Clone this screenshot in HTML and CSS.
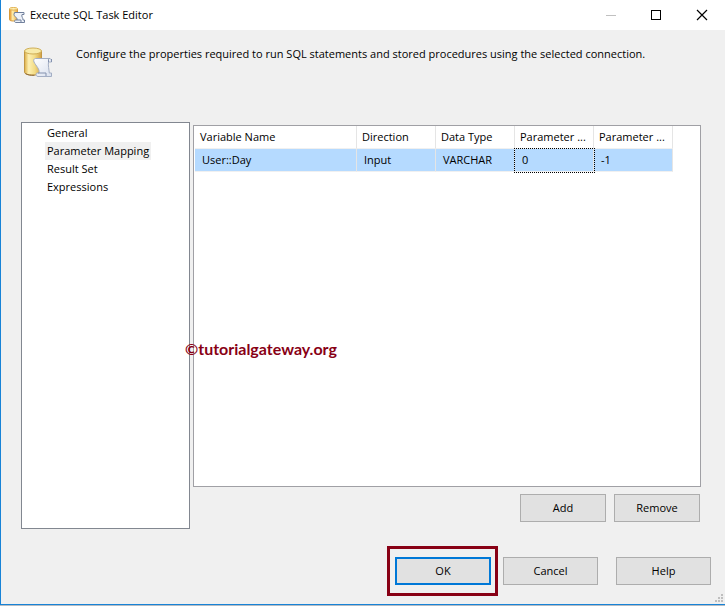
FILE: index.html
```html
<!DOCTYPE html>
<html lang="en">
<head>
    <meta charset="UTF-8">
    <meta name="viewport" content="width=device-width, initial-scale=1.0">
    <title>Execute SQL Task Editor</title>
    <link rel="stylesheet" href="styles.css">
</head>
<body>
    <svg class="defs" width="0" height="0" aria-hidden="true">
        <defs>
            <linearGradient id="gold" x1="0" x2="1" y1="0" y2="0">
                <stop offset="0" stop-color="#dcae45"/>
                <stop offset="0.25" stop-color="#fdf0b4"/>
                <stop offset="0.6" stop-color="#f3dc86"/>
                <stop offset="1" stop-color="#d3a043"/>
            </linearGradient>
            <linearGradient id="orange" x1="0" x2="1" y1="0" y2="0">
                <stop offset="0" stop-color="#e08a1e"/>
                <stop offset="0.4" stop-color="#fff0b0"/>
                <stop offset="1" stop-color="#eba43a"/>
            </linearGradient>
            <linearGradient id="paper" x1="0" x2="1" y1="0" y2="1">
                <stop offset="0" stop-color="#ffffff"/>
                <stop offset="1" stop-color="#d9e0ee"/>
            </linearGradient>
        </defs>
        <symbol id="sql-task" viewBox="0 0 30 32">
            <path d="M1.500 4v21c0 2 3 3 8.500 3s8.500-1 8.500-3V4z" fill="url(#gold)" stroke="#c19745"/>
            <path d="M2.500 26.500c2 1.500 5 2 9 1.800" fill="none" stroke="#8d6a38"/>
            <ellipse cx="10" cy="4" rx="8.500" ry="3" fill="#f8ebaa" stroke="#cfae56"/>
            <path d="M12.500 11.500h14c1.500 0 2 1.500 2 3.500h-3c-.5 4 .5 7 .8 11h2.200v3.500H15c-2.500 0-2.500-3.500-.5-3.500h1.500c1-4-3-7-5-11-.8-2 .2-3.500 1.500-3.500z" fill="url(#paper)" stroke="#a3aec4"/>
            <path d="M25.500 15v-2c0-1 .5-1.500 1-1.500M15 26h8v3M28.500 12v3" fill="none" stroke="#8391ae"/>
        </symbol>
        <symbol id="sql-task-small" viewBox="0 0 16 16">
            <path d="M.5 2v10.500c0 1 1.500 1.500 4 1.500s4-.5 4-1.500V2z" fill="url(#orange)" stroke="#d99a3a"/>
            <ellipse cx="4.500" cy="1.800" rx="4" ry="1.300" fill="#fff0b5" stroke="#e0b050"/>
            <path d="M5.500 5.500h9.500v2h-2c-1 2 1.500 4 1 5.500h1.500v2.500H7c-2 0-2-2.500 0-2.500h1c1-2-3-3.500-3-5.500z" fill="#eef2f9" stroke="#71809c"/>
            <path d="M8 13h4v2" fill="none" stroke="#71809c"/>
        </symbol>
    </svg>

    <div class="window">
        <header class="title-bar">
            <svg class="title-icon" aria-hidden="true"><use href="#sql-task-small"/></svg>
            <h1>Execute SQL Task Editor</h1>
            <div class="window-buttons">
                <button type="button" aria-label="Minimize" disabled>
                    <svg width="12" height="12" viewBox="0 0 12 12"><path d="M2 6.500h10" stroke="#c0c0c0"/></svg>
                </button>
                <button type="button" aria-label="Maximize">
                    <svg width="12" height="12" viewBox="0 0 12 12"><rect x="1.500" y="1.500" width="9" height="9" fill="none" stroke="#000"/></svg>
                </button>
                <button type="button" aria-label="Close">
                    <svg width="12" height="12" viewBox="0 0 12 12"><path d="M1 1l10 10M11 1L1 11" stroke="#000" stroke-width="1.200"/></svg>
                </button>
            </div>
        </header>

        <div class="intro">
            <svg class="intro-icon" aria-hidden="true"><use href="#sql-task"/></svg>
            <p>Configure the properties required to run SQL statements and stored procedures using the selected connection.</p>
        </div>

        <main class="content">
            <nav class="pages">
                <ul>
                    <li><a href="#general">General</a></li>
                    <li><a href="#mapping" class="selected">Parameter Mapping</a></li>
                    <li><a href="#result">Result Set</a></li>
                    <li><a href="#expressions">Expressions</a></li>
                </ul>
            </nav>

            <section class="mapping">
                <div class="grid-box">
                    <table class="grid">
                        <colgroup>
                            <col class="col-name">
                            <col span="4" class="col-value">
                        </colgroup>
                        <thead>
                            <tr>
                                <th>Variable Name</th>
                                <th>Direction</th>
                                <th>Data Type</th>
                                <th>Parameter ...</th>
                                <th>Parameter ...</th>
                            </tr>
                        </thead>
                        <tbody>
                            <tr>
                                <td>User::Day</td>
                                <td>Input</td>
                                <td>VARCHAR</td>
                                <td class="focused">0</td>
                                <td>-1</td>
                            </tr>
                        </tbody>
                    </table>
                </div>
                <div class="row-buttons">
                    <button type="button" class="btn">Add</button>
                    <button type="button" class="btn">Remove</button>
                </div>
            </section>

            <span class="watermark">©tutorialgateway.org</span>
        </main>

        <footer class="dialog-buttons">
            <div class="highlight">
                <button type="button" class="btn btn-wide btn-default">OK</button>
            </div>
            <button type="button" class="btn btn-wide">Cancel</button>
            <button type="button" class="btn btn-wide btn-help">Help</button>
            <svg class="grip" width="8" height="8" viewBox="0 0 8 8" aria-hidden="true">
                <path d="M6 0h2v2h-2zM3 3h2v2h-2zM6 3h2v2h-2zM0 6h2v2h-2zM3 6h2v2h-2zM6 6h2v2h-2z" fill="#bfbfbf"/>
            </svg>
        </footer>
    </div>
</body>
</html>
```
FILE: styles.css
```css
* {
    box-sizing: border-box;
}
body {
    margin: 0;
    padding-bottom: 1px;
    background-color: #b4bcc4;
    color: #000;
    font-family: "Open Sans", "Noto Sans", sans-serif;
    font-size: 11px;
    line-height: 18px;
}
h1, p, ul {
    margin: 0;
    padding: 0;
}
button {
    font: inherit;
    color: inherit;
}
.defs {
    position: absolute;
}
.window {
    display: flex;
    flex-direction: column;
    min-height: calc(100vh - 1px);
    border-left: 1px solid #1883d7;
    border-bottom: 1px solid #1883d7;
    background-color: #f0f0f0;
}

/* Title bar */
.title-bar {
    display: flex;
    align-items: center;
    height: 30px;
    padding-left: 8px;
    background-color: #fff;
}
.title-icon {
    width: 16px;
    height: 16px;
    margin-right: 5px;
}
.title-bar h1 {
    font-size: 11px;
    font-weight: normal;
}
.window-buttons {
    display: flex;
    margin-left: auto;
}
.window-buttons button {
    display: flex;
    align-items: center;
    justify-content: center;
    width: 46px;
    height: 28px;
    padding: 0;
    border: none;
    background: none;
}

/* Description */
.intro {
    display: flex;
    align-items: flex-start;
    gap: 23px;
    height: 92px;
    padding: 15px 20px 0 22px;
}
.intro-icon {
    width: 30px;
    height: 32px;
    margin-top: 2px;
}

/* Page list and grid */
.content {
    position: relative;
    display: flex;
    flex: 1;
    gap: 3px;
    padding: 0 24px 0 20px;
}
.pages {
    width: 169px;
    border: 1px solid #828790;
    background-color: #fff;
}
.pages ul {
    padding: 1px 0 0 23px;
    list-style: none;
}
.pages a {
    display: inline-block;
    padding: 0 2px;
    color: inherit;
    text-decoration: none;
    vertical-align: top;
}
.pages .selected {
    background-color: #f0f0f0;
}
.mapping {
    display: flex;
    flex: 1;
    flex-direction: column;
    padding: 3px 0 7px;
}
.grid-box {
    flex: 1;
    padding-left: 1px;
    border: 1px solid #a0a0a5;
    background-color: #fff;
}
.grid {
    width: 478px;
    table-layout: fixed;
    border-collapse: separate;
    border-spacing: 0;
}
.col-name {
    width: 162px;
}
.col-value {
    width: 79px;
}
.grid th,
.grid td {
    height: 23px;
    padding: 0 0 0 5px;
    border-right: 1px solid #e5e5e5;
    border-bottom: 1px solid #f0f0f0;
    font-weight: normal;
    text-align: left;
    white-space: nowrap;
}
.grid td {
    padding-left: 7px;
    background-color: #b5daff;
}
.grid .focused {
    outline: 1px dotted #000;
}
.row-buttons {
    display: flex;
    justify-content: flex-end;
    gap: 8px;
    padding: 7px 1px 0 0;
}
.watermark {
    position: absolute;
    top: 218px;
    left: 184px;
    color: #880015;
    font-family: Lato, sans-serif;
    font-size: 16px;
    font-weight: bold;
}

/* Buttons */
.btn {
    width: 86px;
    height: 28px;
    padding: 0;
    border: 1px solid #adadad;
    background-color: #e1e1e1;
}
.btn-wide {
    width: 95px;
}
.btn-default {
    width: 96px;
    border: 2px solid #0078d7;
}
.btn-help {
    margin-left: 13px;
}
.dialog-buttons {
    position: relative;
    display: flex;
    align-items: center;
    justify-content: flex-end;
    gap: 5px;
    padding: 17px 14px 8px;
}
.highlight {
    padding: 8px 4px 8px 5px;
    border: 3px solid #880015;
}
.highlight .btn {
    display: block;
}
.grip {
    position: absolute;
    right: 2px;
    bottom: 2px;
}
```
